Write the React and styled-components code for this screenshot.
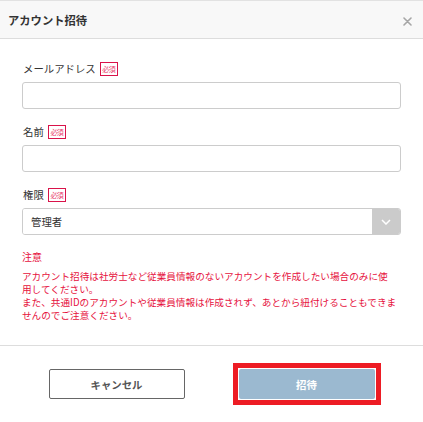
import React from "react";
import styled, { createGlobalStyle } from "styled-components";

const GlobalStyle = createGlobalStyle`
  html, body {
    margin: 0;
    padding: 0;
    background: #ffffff;
  }
  body {
    font-family: "Noto Sans CJK JP", "Noto Sans", sans-serif;
    color: #333333;
  }
`;

const Modal = styled.div`
  width: 423px;
  border-top: 1px solid #e2e2e2;
  background: #ffffff;
`;

const Header = styled.div`
  height: 37px;
  display: flex;
  align-items: center;
  justify-content: space-between;
  padding: 0 10px 0 8px;
  background: #f8f8f8;
  border-bottom: 1px solid #dddddd;
`;

const Title = styled.h1`
  margin: 0;
  font-size: 11.3px;
  font-weight: 700;
  color: #333333;
`;

const CloseButton = styled.button`
  display: flex;
  align-items: center;
  justify-content: center;
  width: 12px;
  height: 12px;
  padding: 0;
  margin-top: 3px;
  border: none;
  background: transparent;
  cursor: pointer;
`;

const Body = styled.div`
  padding: 23px 22px 23px 22px;
`;

const Field = styled.div`
  margin-bottom: ${(p) => (p.last ? "15px" : "16px")};
`;

const LabelRow = styled.div`
  height: 14px;
  display: flex;
  align-items: center;
  margin-bottom: 6px;
`;

const Label = styled.label`
  font-size: 10.4px;
  line-height: 14px;
  color: #333333;
  margin-left: 1px;
`;

const Required = styled.span`
  box-sizing: border-box;
  width: 18px;
  height: 14px;
  margin-left: 4px;
  display: flex;
  align-items: center;
  justify-content: center;
  border: 1px solid #d9134a;
  color: #e8396a;
  font-size: 7px;
  line-height: 1;
  letter-spacing: -0.6px;
`;

const Input = styled.input`
  box-sizing: border-box;
  display: block;
  width: 100%;
  height: 27px;
  padding: 0 9px;
  border: 1px solid #cccccc;
  border-radius: 3px;
  font-family: inherit;
  font-size: 10.4px;
  outline: none;
`;

const SelectBox = styled.div`
  box-sizing: border-box;
  display: flex;
  height: 27px;
  border: 1px solid #cccccc;
  border-radius: 3px;
  overflow: hidden;
`;

const Select = styled.select`
  flex: 1;
  appearance: none;
  border: none;
  padding: 0 8px;
  background: #ffffff;
  font-family: inherit;
  font-size: 10.4px;
  color: #333333;
  outline: none;
`;

const Arrow = styled.div`
  width: 28px;
  display: flex;
  align-items: center;
  justify-content: center;
  background: #cbcbcb;
`;

const NoticeTitle = styled.div`
  font-size: 10px;
  line-height: 13px;
  color: #e6113d;
  margin-bottom: 7px;
`;

const NoticeText = styled.p`
  margin: 0;
  font-size: 9.65px;
  line-height: 13px;
  color: #e6113d;
  white-space: nowrap;
`;

const Footer = styled.div`
  display: flex;
  justify-content: center;
  gap: 54px;
  padding: 23px 0 20px;
  border-top: 1px solid #dddddd;
`;

const HighlightFrame = styled.div`
  display: flex;
  margin: -6px;
  padding: 1px;
  border: 5px solid #ed1c24;
`;

const Button = styled.button`
  box-sizing: border-box;
  width: 136px;
  height: 30px;
  border-radius: 2px;
  font-family: inherit;
  font-size: 10.4px;
  font-weight: 700;
  cursor: pointer;
  outline: none;
  border: ${(p) => (p.primary ? "none" : "1px solid #666666")};
  background: ${(p) => (p.primary ? "#9bb9d0" : "#ffffff")};
  color: ${(p) => (p.primary ? "#ffffff" : "#555555")};
`;

const fields = [
  { id: "email", label: "メールアドレス" },
  { id: "name", label: "名前" },
];

const App = () => {
  return (
    <>
      <GlobalStyle />
      <Modal>
        <Header>
          <Title>アカウント招待</Title>
          <CloseButton aria-label="閉じる">
            <svg width="9" height="9" viewBox="0 0 9 9">
              <path
                d="M1 1 L8 8 M8 1 L1 8"
                stroke="#a6a6a6"
                strokeWidth="1.6"
                strokeLinecap="round"
              />
            </svg>
          </CloseButton>
        </Header>
        <Body>
          {fields.map((f) => (
            <Field key={f.id}>
              <LabelRow>
                <Label htmlFor={f.id}>{f.label}</Label>
                <Required>必須</Required>
              </LabelRow>
              <Input id={f.id} type="text" />
            </Field>
          ))}
          <Field last>
            <LabelRow>
              <Label htmlFor="role">権限</Label>
              <Required>必須</Required>
            </LabelRow>
            <SelectBox>
              <Select id="role" defaultValue="admin">
                <option value="admin">管理者</option>
                <option value="member">一般</option>
              </Select>
              <Arrow>
                <svg width="10" height="6" viewBox="0 0 10 6">
                  <path
                    d="M1 1 L5 5 L9 1"
                    fill="none"
                    stroke="#ffffff"
                    strokeWidth="1.5"
                  />
                </svg>
              </Arrow>
            </SelectBox>
          </Field>
          <NoticeTitle>注意</NoticeTitle>
          <NoticeText>
            アカウント招待は社労士など従業員情報のないアカウントを作成したい場合のみに使
            <br />
            用してください。
            <br />
            また、共通IDのアカウントや従業員情報は作成されず、あとから紐付けることもできま
            <br />
            せんのでご注意ください。
          </NoticeText>
        </Body>
        <Footer>
          <Button>キャンセル</Button>
          <HighlightFrame>
            <Button primary>招待</Button>
          </HighlightFrame>
        </Footer>
      </Modal>
    </>
  );
};

export default App;
